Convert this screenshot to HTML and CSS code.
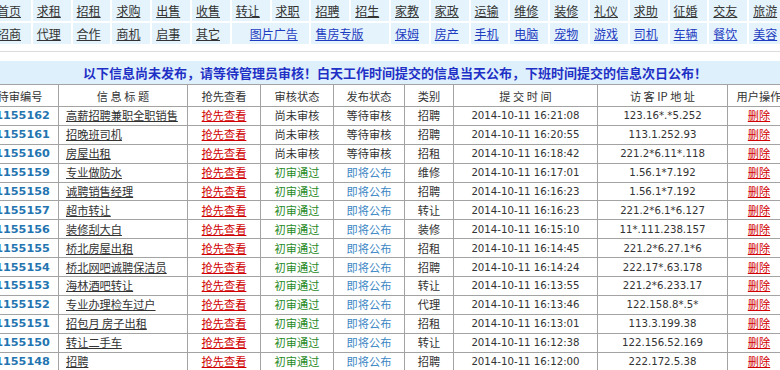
FILE: index.html
```html
<!DOCTYPE html>
<html lang="zh-CN">
<head>
  <meta charset="UTF-8">
  <title>待审信息</title>
  <link rel="stylesheet" href="styles.css">
</head>
<body>
<div class="page">

  <div class="topnav">
    <a href="#">首页</a><a href="#">求租</a><a href="#">招租</a><a href="#">求购</a><a href="#">出售</a>
    <a href="#">收售</a><a href="#">转让</a><a href="#">求职</a><a href="#">招聘</a><a href="#">招生</a>
    <a href="#">家教</a><a href="#">家政</a><a href="#">运输</a><a href="#">维修</a><a href="#">装修</a>
    <a href="#">礼仪</a><a href="#">求助</a><a href="#">征婚</a><a href="#">交友</a><a href="#">旅游</a>

    <a href="#">招商</a><a href="#">代理</a><a href="#">合作</a><a href="#">商机</a><a href="#">启事</a>
    <a href="#">其它</a>
    <a href="#" class="special wide indent">图片广告</a><a href="#" class="special wide">售房专版</a>
    <a href="#" class="special">保姆</a><a href="#" class="special">房产</a><a href="#" class="special">手机</a>
    <a href="#" class="special">电脑</a><a href="#" class="special">宠物</a><a href="#" class="special">游戏</a>
    <a href="#" class="special">司机</a><a href="#" class="special">车辆</a><a href="#" class="special">餐饮</a>
    <a href="#" class="special">美容</a>
  </div>

  <div class="divider"></div>

  <div class="notice">以下信息尚未发布，请等待管理员审核！白天工作时间提交的信息当天公布，下班时间提交的信息次日公布！</div>

  <table class="pending">
    <colgroup>
      <col class="c-id"><col class="c-title"><col class="c-view"><col class="c-check">
      <col class="c-pub"><col class="c-cat"><col class="c-time"><col class="c-ip"><col class="c-op">
    </colgroup>
    <thead>
      <tr>
        <th>待审编号</th><th>信 息 标 题</th><th>抢先查看</th><th>审核状态</th><th>发布状态</th>
        <th>类别</th><th>提 交 时 间</th><th>访 客 IP 地 址</th><th>用户操作</th>
      </tr>
    </thead>
    <tbody id="rows"></tbody>
  </table>

</div>

<script>
  const rows = [
    ["1155162", "高薪招聘兼职全职销售", false, "招聘", "16:21:08", "123.16*.*5.252"],
    ["1155161", "招晚班司机", false, "招聘", "16:20:55", "113.1.252.93"],
    ["1155160", "房屋出租", false, "招租", "16:18:42", "221.2*6.11*.118"],
    ["1155159", "专业做防水", true, "维修", "16:17:01", "1.56.1*7.192"],
    ["1155158", "诚聘销售经理", true, "招聘", "16:16:23", "1.56.1*7.192"],
    ["1155157", "超市转让", true, "转让", "16:16:23", "221.2*6.1*6.127"],
    ["1155156", "装修刮大白", true, "装修", "16:15:10", "11*.111.238.157"],
    ["1155155", "桥北房屋出租", true, "招租", "16:14:45", "221.2*6.27.1*6"],
    ["1155154", "桥北网吧诚聘保洁员", true, "招聘", "16:14:24", "222.17*.63.178"],
    ["1155153", "海林酒吧转让", true, "转让", "16:13:55", "221.2*6.233.17"],
    ["1155152", "专业办理检车过户", true, "代理", "16:13:46", "122.158.8*.5*"],
    ["1155151", "招包月 房子出租", true, "招租", "16:13:01", "113.3.199.38"],
    ["1155150", "转让二手车", true, "转让", "16:12:38", "122.156.52.169"],
    ["1155148", "招聘", true, "招聘", "16:12:00", "222.172.5.38"]
  ];

  const body = document.getElementById("rows");
  rows.forEach(r => {
    const tr = document.createElement("tr");
    const check = r[2]
      ? '<td class="pass">初审通过</td><td class="soon">即将公布</td>'
      : '<td>尚未审核</td><td>等待审核</td>';
    tr.innerHTML =
      '<td class="id">' + r[0] + '</td>' +
      '<td class="title"><a href="#">' + r[1] + '</a></td>' +
      '<td><a href="#" class="red">抢先查看</a></td>' +
      check +
      '<td>' + r[3] + '</td>' +
      '<td class="num">2014-10-11 ' + r[4] + '</td>' +
      '<td class="num">' + r[5] + '</td>' +
      '<td><a href="#" class="red">删除</a></td>';
    body.appendChild(tr);
  });
</script>
</body>
</html>
```

FILE: styles.css
```css
body {
  margin: 0;
  background: #fff;
  color: #333;
  font-family: "Noto Sans CJK SC", "DejaVu Sans", sans-serif;
  overflow: hidden;
}

.page {
  width: 809px;
  margin-left: -19px;
}

/* top category menu */
.topnav {
  display: grid;
  grid-template-columns: repeat(20, 37.8px);
  grid-auto-rows: 21px;
  gap: 2px;
  padding-left: 12px;
}

.topnav a {
  background: #e5f3fc;
  color: #333;
  font-size: 12px;
  line-height: 21px;
  padding-left: 4px;
  text-decoration: underline;
  white-space: nowrap;
}

.topnav a.special {
  color: #1d3cbf;
}

.topnav a.wide {
  grid-column: span 2;
}

.topnav a.indent {
  padding-left: 18px;
}

.divider {
  height: 1px;
  margin-top: 7px;
  background: #dcdcdc;
}

.notice {
  margin-top: 9px;
  height: 23px;
  line-height: 23px;
  background: #dff0fd;
  color: #1f30c6;
  font-size: 13px;
  font-weight: bold;
  text-align: center;
  padding-left: 19px;
}

/* pending list */
.pending {
  table-layout: fixed;
  border-collapse: collapse;
  width: 809px;
  font-size: 11.2px;
}

.c-id { width: 77px; }
.c-title { width: 129px; }
.c-view { width: 73px; }
.c-check { width: 73px; }
.c-pub { width: 71px; }
.c-cat { width: 49px; }
.c-time { width: 144px; }
.c-ip { width: 130px; }
.c-op { width: 63px; }

.pending th,
.pending td {
  border: 1px solid #a3a3a3;
  padding: 0;
  text-align: center;
  white-space: nowrap;
  overflow: hidden;
}

.pending th {
  height: 21px;
  font-weight: normal;
  color: #333;
}

.pending td {
  height: 17.9px;
  line-height: 17px;
}

.pending a {
  color: #333;
  text-decoration: underline;
}

.pending a.red {
  color: #d10000;
}

.pending td.id {
  padding-left: 5px;
  color: #2474b0;
  font-family: "DejaVu Sans", sans-serif;
  font-weight: bold;
  font-size: 11.2px;
}

.pending td.title {
  text-align: left;
  padding-left: 7px;
}

.pending td.pass {
  color: #268a26;
}

.pending td.soon {
  color: #3a86c4;
}

.pending td.num {
  font-family: "DejaVu Sans", sans-serif;
  font-size: 10.2px;
}
```
